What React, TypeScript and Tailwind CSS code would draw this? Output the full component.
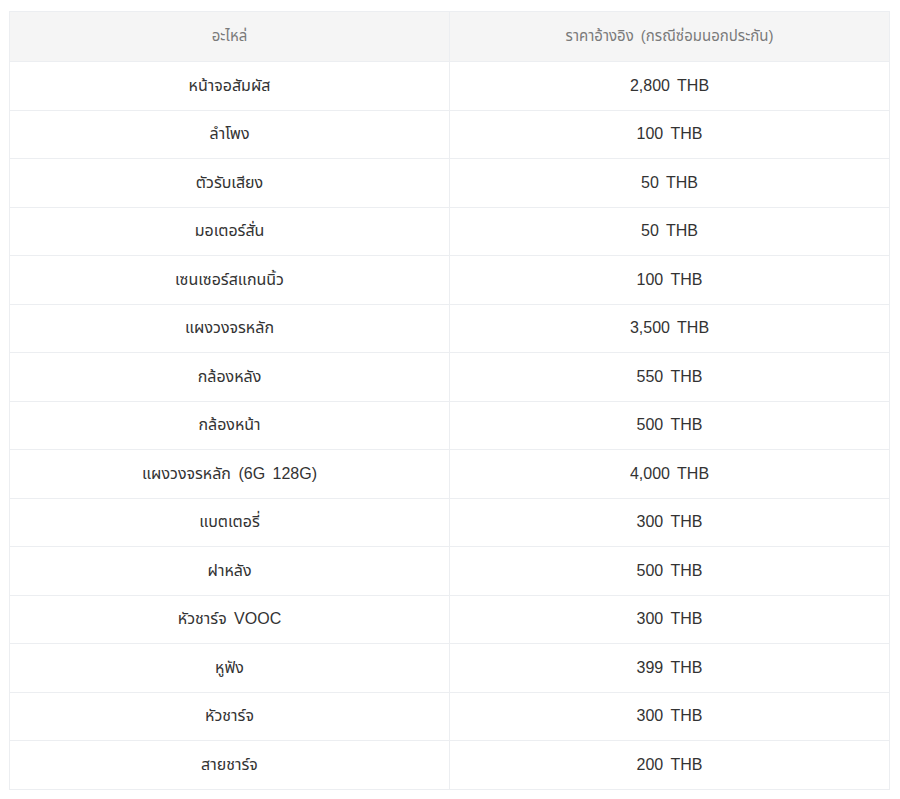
import React from "react";

const rows: [string, string][] = [
  ["หน้าจอสัมผัส", "2,800 THB"],
  ["ลำโพง", "100 THB"],
  ["ตัวรับเสียง", "50 THB"],
  ["มอเตอร์สั่น", "50 THB"],
  ["เซนเซอร์สแกนนิ้ว", "100 THB"],
  ["แผงวงจรหลัก", "3,500 THB"],
  ["กล้องหลัง", "550 THB"],
  ["กล้องหน้า", "500 THB"],
  ["แผงวงจรหลัก (6G 128G)", "4,000 THB"],
  ["แบตเตอรี่", "300 THB"],
  ["ฝาหลัง", "500 THB"],
  ["หัวชาร์จ VOOC", "300 THB"],
  ["หูฟัง", "399 THB"],
  ["หัวชาร์จ", "300 THB"],
  ["สายชาร์จ", "200 THB"],
];

export default function App() {
  return (
    <div
      className="bg-white w-[900px] h-[799px] pt-[11px] pl-[9px] pr-[10px] [word-spacing:3px]"
      style={{ fontFamily: '"Liberation Sans", "Noto Sans Thai", "Noto Sans", sans-serif' }}
    >
      <table className="w-full border-collapse table-fixed border border-[#eceef1]">
        <thead>
          <tr className="h-[50px] bg-[#f5f5f5]">
            <th className="w-1/2 border border-[#eceef1] font-normal text-[15px] text-[#7a7a7a] text-center">
              อะไหล่
            </th>
            <th className="w-1/2 border border-[#eceef1] font-normal text-[15px] text-[#7a7a7a] text-center">
              ราคาอ้างอิง (กรณีซ่อมนอกประกัน)
            </th>
          </tr>
        </thead>
        <tbody>
          {rows.map(([part, price]) => (
            <tr key={part} className="h-[48.5px]">
              <td className="border border-[#eceef1] text-center text-[16px] text-[#333333]">{part}</td>
              <td className="border border-[#eceef1] text-center text-[16px] text-[#333333]">{price}</td>
            </tr>
          ))}
        </tbody>
      </table>
    </div>
  );
}
